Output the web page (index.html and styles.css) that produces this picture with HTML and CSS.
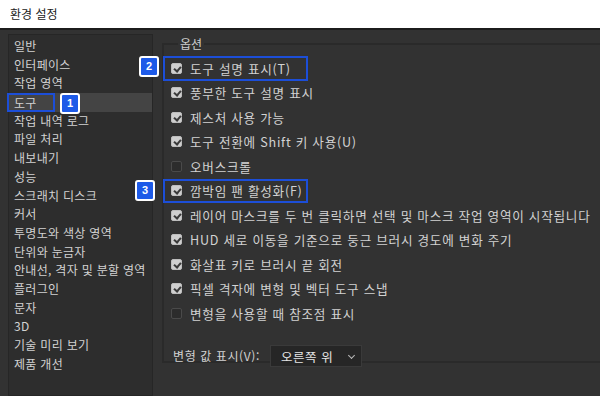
FILE: index.html
```html
<!DOCTYPE html>
<html lang="ko">
<head>
  <meta charset="UTF-8" />
  <title>환경 설정</title>
  <link rel="stylesheet" href="styles.css">
</head>
<body>
  <header class="titlebar">환경 설정</header>
  <main class="dialog">
    <nav class="sidebar">
      <ul>
        <li>일반</li>
        <li>인터페이스</li>
        <li>작업 영역</li>
        <li class="active"><span class="mark">도구<span class="badge b1">1</span></span></li>
        <li>작업 내역 로그</li>
        <li>파일 처리</li>
        <li>내보내기</li>
        <li>성능</li>
        <li>스크래치 디스크</li>
        <li>커서</li>
        <li>투명도와 색상 영역</li>
        <li>단위와 눈금자</li>
        <li>안내선, 격자 및 분할 영역</li>
        <li>플러그인</li>
        <li>문자</li>
        <li>3D</li>
        <li>기술 미리 보기</li>
        <li>제품 개선</li>
      </ul>
    </nav>
    <section class="content">
      <fieldset class="group">
        <legend>옵션</legend>
        <div class="opts">
          <label class="opt marked"><span class="box on"></span>도구 설명 표시(T)<span class="badge b2">2</span></label>
          <label class="opt"><span class="box on"></span>풍부한 도구 설명 표시</label>
          <label class="opt"><span class="box on"></span>제스처 사용 가능</label>
          <label class="opt"><span class="box on"></span>도구 전환에 Shift 키 사용(U)</label>
          <label class="opt"><span class="box"></span>오버스크롤</label>
          <label class="opt marked"><span class="box on"></span>깜박임 팬 활성화(F)<span class="badge b3">3</span></label>
          <label class="opt"><span class="box on"></span>레이어 마스크를 두 번 클릭하면 선택 및 마스크 작업 영역이 시작됩니다</label>
          <label class="opt"><span class="box on"></span>HUD 세로 이동을 기준으로 둥근 브러시 경도에 변화 주기</label>
          <label class="opt"><span class="box on"></span>화살표 키로 브러시 끝 회전</label>
          <label class="opt"><span class="box on"></span>픽셀 격자에 변형 및 벡터 도구 스냅</label>
          <label class="opt"><span class="box"></span>변형을 사용할 때 참조점 표시</label>
        </div>
        <div class="field">
          <span class="field-label">변형 값 표시(V):</span>
          <span class="select">오른쪽 위<span class="chev"></span></span>
        </div>
      </fieldset>
    </section>
  </main>
</body>
</html>
```

FILE: styles.css
```css
html, body {
  margin: 0;
  padding: 0;
}
body {
  width: 600px;
  height: 396px;
  overflow: hidden;
  background: #323232;
  color: #d2d2d2;
  font-family: "Noto Sans CJK KR", "Noto Sans", sans-serif;
}
.titlebar {
  height: 28px;
  line-height: 28px;
  padding-left: 10px;
  background: #fff;
  color: #222;
  font-size: 12px;
  border-bottom: 2px solid #1c1c1c;
}
.dialog {
  display: grid;
  grid-template-columns: 145px 1fr;
  column-gap: 9px;
  padding: 4px 0 0 8px;
  height: 366px;
  box-sizing: border-box;
}
.sidebar {
  background: #2d2d2d;
  border: 1px solid #262626;
  padding-top: 2px;
}
.sidebar ul {
  list-style: none;
  margin: 0;
  padding: 0;
}
.sidebar li {
  height: 18.7px;
  line-height: 18.7px;
  padding-left: 5px;
  font-size: 12px;
  letter-spacing: 0.3px;
  white-space: nowrap;
}
.sidebar li.active {
  background: #444;
}
.mark {
  position: relative;
  display: inline-block;
  margin-left: -7px;
  padding: 0 16px 0 5px;
  border: 2px solid #1c4ed8;
  line-height: 15px;
}
.badge {
  position: absolute;
  width: 16px;
  height: 17px;
  line-height: 17px;
  text-align: center;
  background: #1d5ae8;
  color: #fff;
  font-family: "Liberation Sans", Arial, sans-serif;
  font-size: 11px;
  font-weight: bold;
  letter-spacing: 0;
  border: 2px solid #fff;
  border-radius: 3px;
}
.b1 { left: 51px; top: -2px; }
.b2 { left: -26px; top: -2px; }
.b3 { left: -30px; top: -1px; }
.content {
  padding-top: 3px;
  min-width: 0;
}
.group {
  margin: 0;
  height: 322px;
  padding: 0 0 0 7px;
  border: 2px solid #2a2a2a;
  border-right: none;
}
.group legend {
  margin-left: 7px;
  padding: 0 2px;
  font-size: 12px;
  line-height: 14px;
  color: #cfcfcf;
}
.opts {
  display: flex;
  flex-direction: column;
  padding-top: 5px;
}
.opt {
  position: relative;
  display: flex;
  align-items: center;
  height: 24.5px;
  font-size: 12.6px;
  letter-spacing: 0.75px;
  white-space: nowrap;
}
.opt.marked {
  align-self: flex-start;
  margin-left: -8px;
  padding: 0 10px 0 6px;
  width: 125px;
  height: 20.5px;
  border: 2px solid #1c4ed8;
}
.box {
  width: 11px;
  height: 11px;
  margin-right: 8px;
  border-radius: 2px;
  background: #2c2c2c;
  border: 1px solid #4a4a4a;
  box-sizing: border-box;
  position: relative;
  flex: none;
}
.box.on {
  background: #cfcfcf;
  border-color: #bdbdbd;
}
.box.on::after {
  content: "";
  position: absolute;
  left: 3px;
  top: 1px;
  width: 3px;
  height: 5px;
  border: solid #3a3a3a;
  border-width: 0 2px 2px 0;
  transform: rotate(40deg);
}
.field {
  display: flex;
  align-items: center;
  gap: 10px;
  margin-top: 19px;
  padding-left: 2px;
  font-size: 12px;
  letter-spacing: 0.6px;
}
.select {
  position: relative;
  display: inline-block;
  width: 92px;
  height: 22px;
  line-height: 22px;
  padding-left: 10px;
  box-sizing: border-box;
  background: #262626;
  border: 1px solid #3a3a3a;
  color: #e6e6e6;
  font-size: 12.5px;
}
.chev {
  position: absolute;
  right: 7px;
  top: 7px;
  width: 4px;
  height: 4px;
  border: solid #bbb;
  border-width: 0 1px 1px 0;
  transform: rotate(45deg);
}
```
